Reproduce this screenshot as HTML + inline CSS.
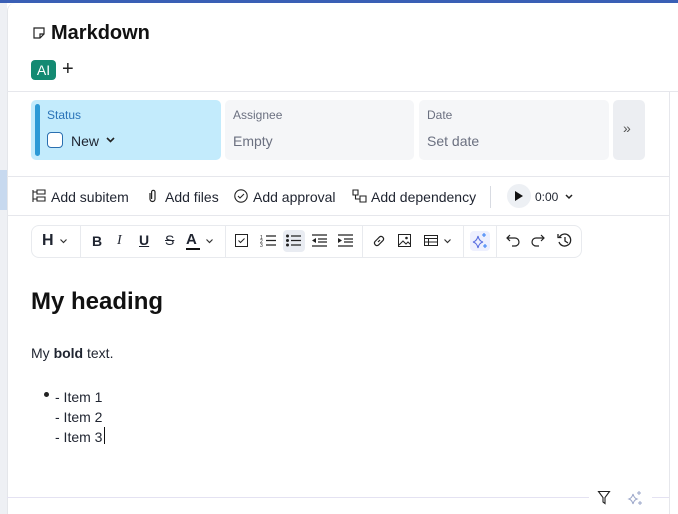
<!DOCTYPE html>
<html><head><style>
*{margin:0;padding:0;box-sizing:border-box}
body{width:678px;height:514px;overflow:hidden;background:#fff;font-family:"Liberation Sans","DejaVu Sans",sans-serif;color:#1f2430;position:relative}
.a{position:absolute}
.t{position:absolute;white-space:nowrap}
svg{position:absolute;overflow:visible}
</style></head><body>
<div class="a" style="left:0;top:0;width:678px;height:3px;background:#3a5fb5"></div>
<div class="a" style="left:0;top:3px;width:7px;height:511px;background:#eef0f4"></div>
<div class="a" style="left:0;top:170px;width:7px;height:40px;background:#c7d9ef"></div>
<div class="a" style="left:7px;top:3px;width:671px;height:511px;background:#fff;border-radius:8px 0 0 0;border-left:1px solid #e4e6ea"></div>
<!-- title -->
<svg style="left:33px;top:27px" width="12" height="12" viewBox="0 0 12 12"><path d="M1 1h10v6l-4 4H1z M7 11V7h4" fill="none" stroke="#222" stroke-width="1.2"/></svg>
<div class="t" style="left:51px;top:22px;font-size:20px;font-weight:bold;color:#111">Markdown</div>
<div class="a" style="left:31px;top:60px;width:25px;height:20px;background:#138a72;border-radius:4px;color:#fff;font-size:14px;text-align:center;line-height:20px">AI</div>
<div class="t" style="left:62px;top:58px;font-size:20px;color:#222">+</div>
<div class="a" style="left:7px;top:91px;width:671px;height:1px;background:#e6e7ec"></div>
<div class="a" style="left:669px;top:92px;width:1px;height:422px;background:#e6e7ec"></div>
<!-- cards -->
<div class="a" style="left:31px;top:100px;width:190px;height:60px;background:#c3ebfc;border-radius:5px"></div>
<div class="a" style="left:35px;top:104px;width:5px;height:52px;background:#2d9ad6;border-radius:3px"></div>
<div class="t" style="left:47px;top:108px;font-size:12px;color:#2a73b8">Status</div>
<div class="a" style="left:47px;top:132px;width:16px;height:16px;border:1.5px solid #2a6fb0;border-radius:4px;background:#fff"></div>
<div class="t" style="left:71px;top:133px;font-size:14px;color:#1f2430">New</div>
<svg style="left:106px;top:137px" width="9" height="6"><path d="M1 1l3.5 3.5L8 1" fill="none" stroke="#222" stroke-width="1.6"/></svg>
<div class="a" style="left:225px;top:100px;width:189px;height:60px;background:#f5f6f8;border-radius:5px"></div>
<div class="t" style="left:233px;top:108px;font-size:12px;color:#6b7080">Assignee</div>
<div class="t" style="left:233px;top:133px;font-size:14px;color:#6b7080">Empty</div>
<div class="a" style="left:419px;top:100px;width:190px;height:60px;background:#f5f6f8;border-radius:5px"></div>
<div class="t" style="left:427px;top:108px;font-size:12px;color:#6b7080">Date</div>
<div class="t" style="left:427px;top:133px;font-size:14px;color:#6b7080">Set date</div>
<div class="a" style="left:613px;top:100px;width:32px;height:60px;background:#eceef2;border-radius:5px"></div>
<div class="t" style="left:623px;top:120px;font-size:14px;color:#555">»</div>
<div class="a" style="left:7px;top:176px;width:662px;height:1px;background:#e6e7ec"></div>
<!-- actions -->
<svg style="left:32px;top:190px" width="14" height="12"><path d="M1 0v12M1 2h4M5 0h8v4H5zM1 9h4M5 7h8v4H5z" fill="none" stroke="#222" stroke-width="1.1"/></svg>
<div class="t" style="left:51px;top:189px;font-size:14px">Add subitem</div>
<svg style="left:148px;top:189px" width="9" height="14"><path d="M2 4v6a2.5 2.5 0 0 0 5 0V3a1.7 1.7 0 0 0-3.4 0v7" fill="none" stroke="#222" stroke-width="1.2"/></svg>
<div class="t" style="left:165px;top:189px;font-size:14px">Add files</div>
<svg style="left:234px;top:189px" width="14" height="14"><circle cx="7" cy="7" r="6.2" fill="none" stroke="#222" stroke-width="1.1"/><path d="M4 7l2 2 4-4" fill="none" stroke="#222" stroke-width="1.1"/></svg>
<div class="t" style="left:253px;top:189px;font-size:14px">Add approval</div>
<svg style="left:352px;top:189px" width="15" height="14"><path d="M1 1h5v5H1zM8 7h6v6H8zM3.5 6v4h4" fill="none" stroke="#222" stroke-width="1.1"/></svg>
<div class="t" style="left:371px;top:189px;font-size:14px">Add dependency</div>
<div class="a" style="left:490px;top:186px;width:1px;height:22px;background:#d8dbe2"></div>
<div class="a" style="left:507px;top:184px;width:24px;height:24px;border-radius:12px;background:#edf0f4"></div>
<svg style="left:515px;top:191px" width="9" height="10"><path d="M0 0l8 5-8 5z" fill="#111"/></svg>
<div class="t" style="left:535px;top:190px;font-size:12px">0:00</div>
<svg style="left:565px;top:194px" width="8" height="5"><path d="M1 1l3 3 3-3" fill="none" stroke="#222" stroke-width="1.5"/></svg>
<div class="a" style="left:7px;top:215px;width:662px;height:1px;background:#e6e7ec"></div>
<!-- toolbar -->
<div class="a" style="left:31px;top:225px;width:551px;height:33px;border:1px solid #e8eaee;border-radius:8px"></div>
<div class="a" style="left:80px;top:226px;width:1px;height:31px;background:#e8eaee"></div>
<div class="a" style="left:225px;top:226px;width:1px;height:31px;background:#e8eaee"></div>
<div class="a" style="left:362px;top:226px;width:1px;height:31px;background:#e8eaee"></div>
<div class="a" style="left:463px;top:226px;width:1px;height:31px;background:#e8eaee"></div>
<div class="a" style="left:496px;top:226px;width:1px;height:31px;background:#e8eaee"></div>
<div class="t" style="left:42px;top:232px;font-size:16px;font-weight:bold">H</div>
<svg style="left:60px;top:239px" width="7" height="4"><path d="M.5.5l3 3 3-3" fill="none" stroke="#333" stroke-width="1.2"/></svg>
<div class="t" style="left:92px;top:233px;font-size:14px;font-weight:bold">B</div>
<div class="t" style="left:117px;top:233px;font-size:14px;font-style:italic;font-family:'Liberation Serif',serif">I</div>
<div class="t" style="left:139px;top:232px;font-size:14px;font-weight:bold;text-decoration:underline">U</div>
<div class="t" style="left:165px;top:232px;font-size:14px;text-decoration:line-through">S</div>
<div class="t" style="left:186px;top:231px;font-size:15px;font-weight:bold">A</div>
<div class="a" style="left:186px;top:248px;width:14px;height:2px;background:#111"></div>
<svg style="left:206px;top:239px" width="7" height="4"><path d="M.5.5l3 3 3-3" fill="none" stroke="#333" stroke-width="1.2"/></svg>
<svg style="left:235px;top:234px" width="13" height="13"><path d="M.5.5h12v12H.5z M3.5 6.5l2 2 4-4" fill="none" stroke="#222" stroke-width="1"/></svg>
<svg style="left:260px;top:234px" width="16" height="13"><path d="M6 2h10M6 6.5h10M6 11h10" stroke="#222" stroke-width="1.2"/><text x="0" y="5" font-size="5" fill="#222">1</text><text x="0" y="9" font-size="5" fill="#222">2</text><text x="0" y="13" font-size="5" fill="#222">3</text></svg>
<div class="a" style="left:283px;top:230px;width:22px;height:22px;background:#e9ecf2;border-radius:4px"></div>
<svg style="left:286px;top:234px" width="16" height="13"><circle cx="1.5" cy="2" r="1.5" fill="#222"/><circle cx="1.5" cy="6.5" r="1.5" fill="#222"/><circle cx="1.5" cy="11" r="1.5" fill="#222"/><path d="M5 2h10M5 6.5h10M5 11h10" stroke="#222" stroke-width="1.2"/></svg>
<svg style="left:312px;top:234px" width="15" height="13"><path d="M0 1h15M6 5h9M6 8h9M0 12h15" stroke="#222" stroke-width="1.2"/><path d="M4 4v5L0 6.5z" fill="#222"/></svg>
<svg style="left:338px;top:234px" width="15" height="13"><path d="M0 1h15M6 5h9M6 8h9M0 12h15" stroke="#222" stroke-width="1.2"/><path d="M0 4v5l4-2.5z" fill="#222"/></svg>
<svg style="left:372px;top:234px" width="14" height="14"><path d="M6 8l2-2M5 5.5L7.5 3a2.5 2.5 0 0 1 3.5 3.5L8.5 9M9 8.5L6.5 11A2.5 2.5 0 0 1 3 7.5L5.5 5" fill="none" stroke="#222" stroke-width="1.2"/></svg>
<svg style="left:398px;top:234px" width="13" height="13"><path d="M.5.5h12v12H.5zM1 11l4-4 3 3 2-2 2.5 2.5" fill="none" stroke="#222" stroke-width="1"/><circle cx="8.5" cy="4" r="1.3" fill="#222"/></svg>
<svg style="left:424px;top:235px" width="14" height="11"><path d="M.5.5h13v10H.5zM.5 3.5h13M.5 7h13M4.5 3.5v7" fill="none" stroke="#222" stroke-width="1"/></svg>
<svg style="left:444px;top:239px" width="7" height="4"><path d="M.5.5l3 3 3-3" fill="none" stroke="#333" stroke-width="1.2"/></svg>
<div class="a" style="left:470px;top:231px;width:20px;height:20px;background:#eef0fe;border-radius:4px"></div>
<svg style="left:472px;top:233px" width="16" height="16"><path d="M6 3q1 5 5 6q-4 1-5 6q-1-5-5-6q4-1 5-6z" fill="none" stroke="#5a6fe0" stroke-width="1.1"/><path d="M12 0v4M10 2h4M13 11v4M11 13h4" stroke="#3b82f6" stroke-width="1.1"/></svg>
<svg style="left:506px;top:234px" width="14" height="12"><path d="M4 1L1 4l3 3M1 4h8a4 4 0 0 1 0 8H6" fill="none" stroke="#222" stroke-width="1.2"/></svg>
<svg style="left:531px;top:234px" width="14" height="12"><path d="M10 1l3 3-3 3M13 4H5a4 4 0 0 0 0 8h3" fill="none" stroke="#222" stroke-width="1.2"/></svg>
<svg style="left:557px;top:233px" width="15" height="15"><path d="M2.5 4A6 6 0 1 1 2 9M1 1v3.5h3.5M8 4v4l3 2" fill="none" stroke="#222" stroke-width="1.3"/></svg>
<!-- content -->
<div class="t" style="left:31px;top:288px;font-size:24px;font-weight:bold;color:#111">My heading</div>
<div class="t" style="left:31px;top:345px;font-size:14px">My <b>bold</b> text.</div>
<div class="a" style="left:44px;top:392px;width:5px;height:5px;border-radius:3px;background:#222"></div>
<div class="t" style="left:55px;top:387px;font-size:14px;line-height:20px">- Item 1<br>- Item 2<br>- Item 3</div>
<div class="a" style="left:104px;top:427px;width:1px;height:17px;background:#111"></div>
<!-- bottom -->
<div class="a" style="left:7px;top:497px;width:582px;height:1px;background:#e4e2f2"></div>
<div class="a" style="left:652px;top:497px;width:17px;height:1px;background:#e4e2f2"></div>
<svg style="left:598px;top:491px" width="12" height="14"><path d="M.5.5h11L7 6.5v6L5 11V6.5z" fill="none" stroke="#222" stroke-width="1.1"/></svg>
<svg style="left:628px;top:491px" width="16" height="15"><path d="M5 3q1 4 4 5q-3 1-4 5q-1-4-4-5q3-1 4-5z" fill="none" stroke="#9aa5c8" stroke-width="1"/><path d="M11 0v4M9 2h4M12 10v4M10 12h4" stroke="#9aa5c8" stroke-width="1"/></svg>
</body></html>
